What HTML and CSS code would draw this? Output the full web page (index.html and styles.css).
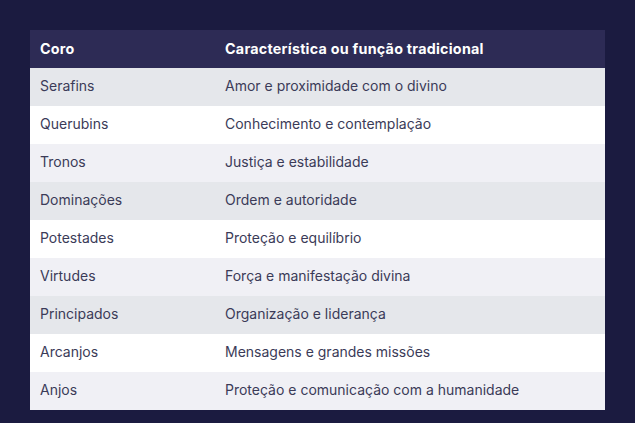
FILE: index.html
```html
<!DOCTYPE html>
<html lang="pt">
<head>
<meta charset="utf-8">
<link rel="stylesheet" href="styles.css">
</head>
<body>
<main class="page">
  <table class="choirs">
    <thead>
      <tr><th class="col-coro">Coro</th><th>Característica ou função tradicional</th></tr>
    </thead>
    <tbody>
      <tr><td>Serafins</td><td>Amor e proximidade com o divino</td></tr>
      <tr><td>Querubins</td><td>Conhecimento e contemplação</td></tr>
      <tr><td>Tronos</td><td>Justiça e estabilidade</td></tr>
      <tr><td>Dominações</td><td>Ordem e autoridade</td></tr>
      <tr><td>Potestades</td><td>Proteção e equilíbrio</td></tr>
      <tr><td>Virtudes</td><td>Força e manifestação divina</td></tr>
      <tr><td>Principados</td><td>Organização e liderança</td></tr>
      <tr><td>Arcanjos</td><td>Mensagens e grandes missões</td></tr>
      <tr><td>Anjos</td><td>Proteção e comunicação com a humanidade</td></tr>
    </tbody>
  </table>
</main>
</body>
</html>
```

FILE: styles.css
```css
html, body {
  margin: 0;
  padding: 0;
  background: #1b1b40;
}
body {
  font-family: Inter, "Noto Sans", sans-serif;
  font-size: 14px;
}
.page {
  padding: 30px;
}
.choirs {
  width: 575px;
  border-collapse: collapse;
  table-layout: fixed;
}
.choirs th,
.choirs td {
  text-align: left;
  padding: 8px 10px;
  line-height: 22px;
  white-space: nowrap;
}
.col-coro {
  width: 165px;
}
.choirs th {
  background: #2d2b55;
  color: #ffffff;
  font-weight: 700;
  font-size: 14.3px;
  letter-spacing: 0.25px;
}
.choirs td {
  color: #3b3b58;
  padding-top: 7px;
  padding-bottom: 9px;
}
.choirs tbody tr:nth-child(3n+1) {
  background: #e5e7eb;
}
.choirs tbody tr:nth-child(3n+2) {
  background: #ffffff;
}
.choirs tbody tr:nth-child(3n) {
  background: #f0f0f5;
}
```
